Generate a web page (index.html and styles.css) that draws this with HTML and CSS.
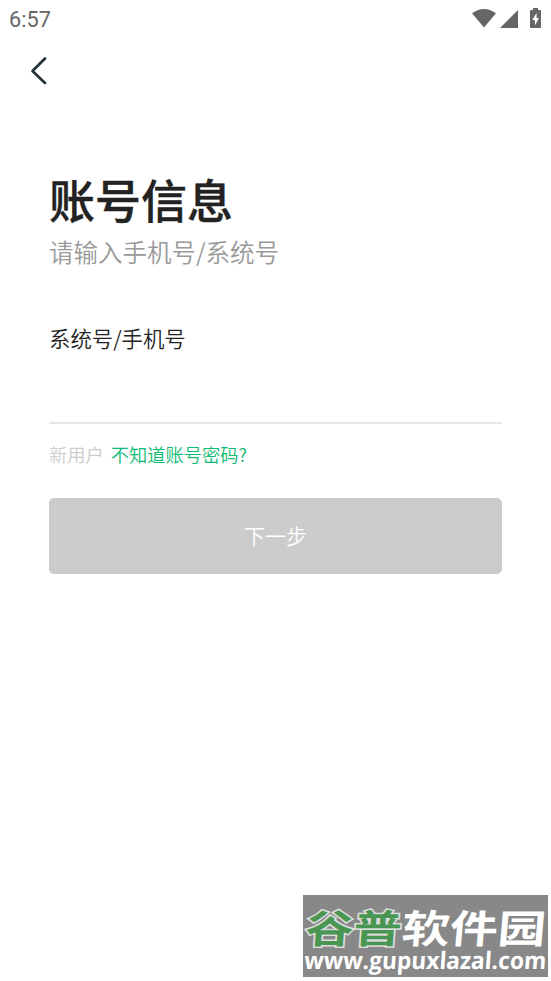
FILE: index.html
```html
<!DOCTYPE html>
<html lang="zh-CN">
<head>
<meta charset="utf-8">
<title>账号信息</title>
<link rel="stylesheet" href="styles.css">
</head>
<body>
<header class="status">
  <span class="time">6:57</span>
  <svg class="status-icons" width="72" height="24" viewBox="0 0 72 24" fill="#666">
    <path d="M0 4.3Q12-4.3 24 4.3L12 18.5Z"/>
    <path d="M46 1V19H28Z"/>
    <path fill-rule="evenodd" d="M61-1H66V1H68Q69 1 69 2V18Q69 19 68 19H59Q58 19 58 18V2Q58 1 59 1H61ZM64.6 4L60.2 11H62.9V16.4L67 9H64.6Z"/>
  </svg>
</header>
<nav class="nav">
  <svg width="20" height="30" viewBox="0 0 20 30"><path d="M16 2.5L3.5 15L16 27" fill="none" stroke="#22343a" stroke-width="2.7" stroke-linecap="round" stroke-linejoin="round"/></svg>
</nav>
<main class="form">
  <h1 class="title">账号信息</h1>
  <p class="subtitle">请输入手机号/系统号</p>
  <label class="label" for="account">系统号/手机号</label>
  <input class="field" id="account" type="text">
  <div class="help"><span>新用户</span><a class="link">不知道账号密码?</a></div>
  <button class="next" type="button">下一步</button>
</main>
<aside class="watermark">
  <svg width="248" height="86" viewBox="0 0 248 86">
    <rect width="245" height="82" fill="#888"/>
    <g class="brand">
      <text class="brand-green" x="2" y="48" textLength="96" lengthAdjust="spacingAndGlyphs" transform="translate(3 0) skewX(-4)">谷普</text>
      <text class="brand-white" x="99" y="48" textLength="144" lengthAdjust="spacingAndGlyphs" transform="translate(3 0) skewX(-5)">软件园</text>
    </g>
    <text class="site" x="1" y="74" textLength="242" lengthAdjust="spacingAndGlyphs" transform="translate(5 0) skewX(-4)">www.gupuxlazal.com</text>
  </svg>
</aside>
</body>
</html>
```
FILE: styles.css
```css
* { box-sizing: border-box; }
body {
  margin: 0;
  height: 981px;
  position: relative;
  overflow: hidden;
  background: #fff;
  color: #222;
  font-family: "Noto Sans CJK SC", sans-serif;
}
.status {
  height: 40px;
  padding: 9px 7px 0 9px;
  display: flex;
  justify-content: space-between;
  align-items: flex-start;
}
.status-icons { overflow: visible; }
.time {
  font: 400 21.7px/22px Roboto, sans-serif;
  color: #666;
}
.nav { height: 60px; padding: 16px 0 0 29px; }
.nav svg { display: block; }
.form { padding: 68px 49px 0; }
.title {
  margin: 0;
  font-size: 46px;
  line-height: 60px;
  font-weight: 500;
  -webkit-text-stroke: 0.4px #222;
}
.subtitle {
  margin: 8px 0 0;
  font-size: 24.5px;
  line-height: 32px;
  font-weight: 350;
  color: #999;
}
.label {
  display: block;
  margin-top: 54px;
  font-size: 21.4px;
  line-height: 32px;
  font-weight: 350;
}
.field {
  display: block;
  width: 100%;
  height: 70px;
  padding: 0;
  border: 0;
  border-bottom: 2px solid #e6e6e6;
  background: none;
  font: inherit;
  font-size: 21px;
  outline: none;
}
.help {
  display: flex;
  gap: 7px;
  margin-top: 16px;
  font-size: 18.25px;
  line-height: 28px;
  font-weight: 350;
  color: #ccc;
}
.link { color: #0dbb72; }
.next {
  display: block;
  width: 100%;
  height: 76px;
  margin-top: 30px;
  padding: 0 0 2px;
  border: 0;
  border-radius: 5px;
  background: #ccc;
  color: #fff;
  font: 350 21px/74px "Noto Sans CJK SC", sans-serif;
}
.watermark { position: absolute; left: 303px; top: 895px; }
.watermark svg { display: block; overflow: visible; }
.brand {
  font-family: "Noto Sans CJK SC", sans-serif;
  font-size: 39px;
  font-weight: 700;
}
.brand-green {
  fill: #499653;
  stroke: #ddd;
  stroke-width: 3px;
  paint-order: stroke;
}
.brand-white { fill: #fff; }
.site {
  fill: #fff;
  font: 700 24px "Open Sans", sans-serif;
}
```
